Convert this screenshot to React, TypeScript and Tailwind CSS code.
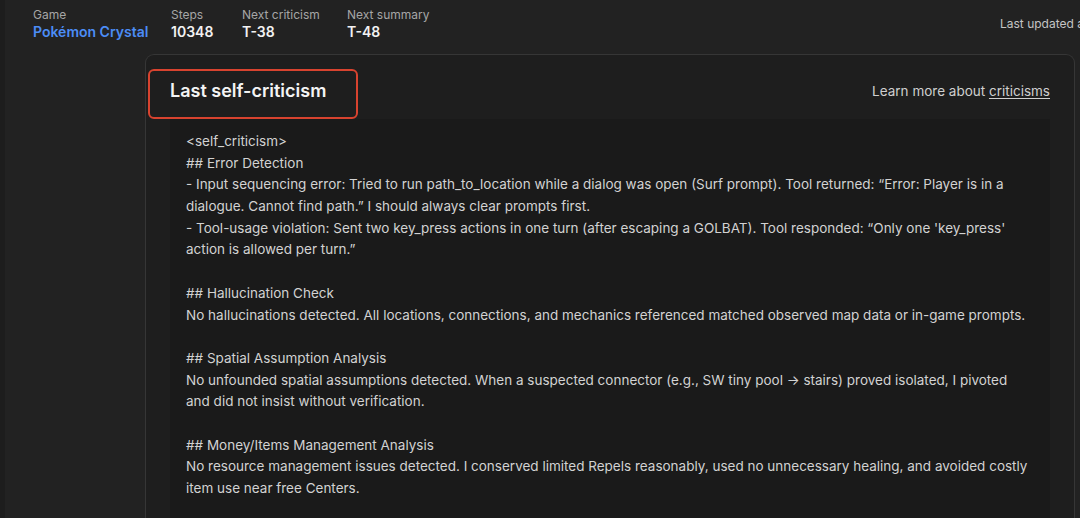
const stats = [
  { label: "Game", value: "Pokémon Crystal", width: "w-[138px]", color: "text-[#4c8df6]" },
  { label: "Steps", value: "10348", width: "w-[71px]", color: "text-[#f2f2f2]" },
  { label: "Next criticism", value: "T-38", width: "w-[105px]", color: "text-[#f2f2f2]" },
  { label: "Next summary", value: "T-48", width: "w-[120px]", color: "text-[#f2f2f2]" },
];

const lines = [
  "<self_criticism>",
  "## Error Detection",
  "- Input sequencing error: Tried to run path_to_location while a dialog was open (Surf prompt). Tool returned: “Error: Player is in a",
  "dialogue. Cannot find path.” I should always clear prompts first.",
  "- Tool-usage violation: Sent two key_press actions in one turn (after escaping a GOLBAT). Tool responded: “Only one 'key_press'",
  "action is allowed per turn.”",
  "",
  "## Hallucination Check",
  "No hallucinations detected. All locations, connections, and mechanics referenced matched observed map data or in-game prompts.",
  "",
  "## Spatial Assumption Analysis",
  "No unfounded spatial assumptions detected. When a suspected connector (e.g., SW tiny pool → stairs) proved isolated, I pivoted",
  "and did not insist without verification.",
  "",
  "## Money/Items Management Analysis",
  "No resource management issues detected. I conserved limited Repels reasonably, used no unnecessary healing, and avoided costly",
  "item use near free Centers.",
  "",
];

export default function App() {
  return (
    <div
      className="w-screen h-screen overflow-hidden bg-[#222222] flex"
      style={{ fontFamily: "Inter, 'Noto Sans', sans-serif" }}
    >
      <div className="w-[5px] shrink-0 bg-[#1d1d1d]" />
      <div className="flex-1 flex flex-col">
        {/* header stats */}
        <div className="flex items-start pl-[28px] pt-[6px] h-[54px] shrink-0">
          {stats.map((s) => (
            <div key={s.label} className={`${s.width} shrink-0 flex flex-col`}>
              <span className="text-[12px] leading-[17px] text-[#a6a6a6]">{s.label}</span>
              <span className={`text-[14px] leading-[17px] font-semibold ${s.color}`}>{s.value}</span>
            </div>
          ))}
          <div className="ml-auto w-[80px] shrink-0 whitespace-nowrap text-[12px] leading-[17px] text-[#c4c4c4] pt-[9px]">
            Last updated at 10:42:18 AM
          </div>
        </div>

        {/* panel */}
        <div className="relative ml-[140px] w-[930px] flex-1 rounded-t-[9px] border border-b-0 border-[#363636] bg-[#1e1e1e] px-[24px]">
          <div className="absolute left-[2px] top-[14px] w-[210px] h-[50px] rounded-[6px] border-[2.5px] border-[#d8432f]" />
          <div className="flex items-center justify-between pt-[22px] pb-[14px]">
            <h2 className="text-[18px] leading-[28px] font-semibold text-[#f4f4f4]">Last self-criticism</h2>
            <div className="text-[13.5px] text-[#cfcfcf]">
              Learn more about <span className="underline underline-offset-2">criticisms</span>
            </div>
          </div>
          <div className="bg-[#1a1a1a] pl-[16px] pr-[12px] pt-[12px] pb-[8px] text-[13.5px] leading-[21.7px] text-[#d2d2d2]">
            {lines.map((l, i) => (
              <div key={i} className="whitespace-nowrap h-[21.7px]">
                {l}
              </div>
            ))}
          </div>
        </div>
      </div>
    </div>
  );
}
